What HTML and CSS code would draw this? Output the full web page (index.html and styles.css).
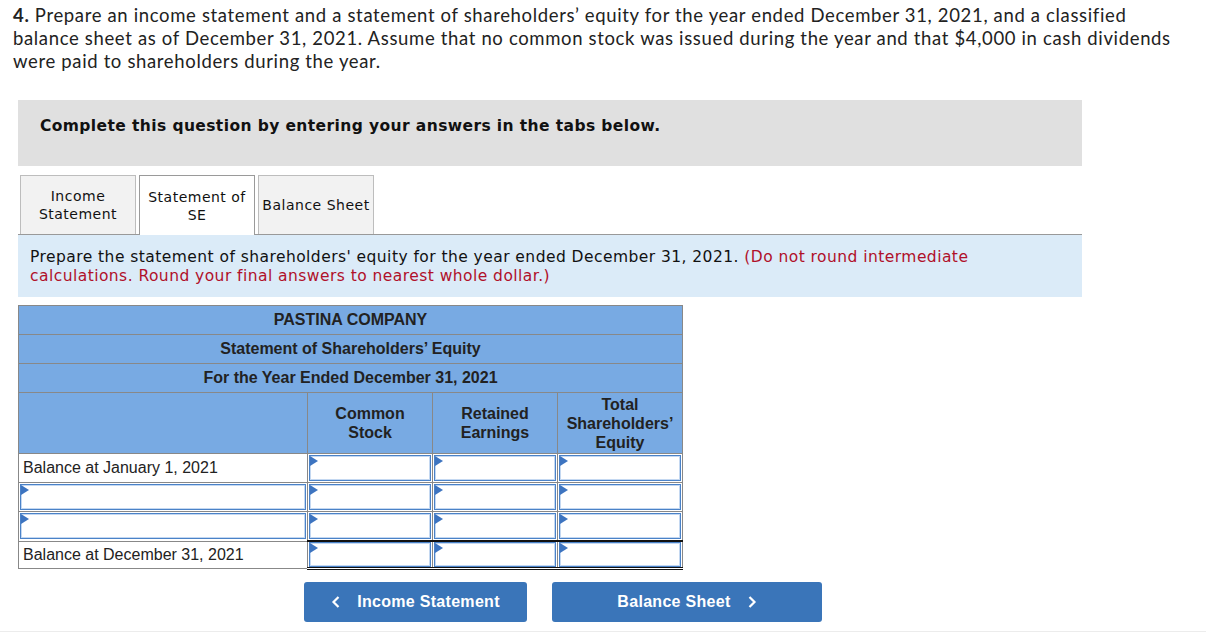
FILE: index.html
```html
<!DOCTYPE html>
<html>
<head>
<meta charset="utf-8">
<link rel="stylesheet" href="styles.css">
</head>
<body>
<div class="page">
  <p class="question"><b>4.</b> Prepare an income statement and a statement of shareholders’ equity for the year ended December 31, 2021, and a classified balance sheet as of December 31, 2021. Assume that no common stock was issued during the year and that $4,000 in cash dividends were paid to shareholders during the year.</p>

  <div class="panel">
    <div class="complete">Complete this question by entering your answers in the tabs below.</div>

    <div class="tabs">
      <div class="tab">Income<br>Statement</div>
      <div class="tab active">Statement of<br>SE</div>
      <div class="tab">Balance Sheet</div>
    </div>

    <div class="instr">Prepare the statement of shareholders' equity for the year ended December 31, 2021. <span class="red">(Do not round intermediate calculations. Round your final answers to nearest whole dollar.)</span></div>

    <table class="se">
      <colgroup><col class="c1"><col class="cn"><col class="cn"><col class="cn"></colgroup>
      <tr class="hrow"><th colspan="4">PASTINA COMPANY</th></tr>
      <tr class="hrow"><th colspan="4">Statement of Shareholders’ Equity</th></tr>
      <tr class="hrow"><th colspan="4">For the Year Ended December 31, 2021</th></tr>
      <tr class="colhead"><th></th><th>Common<br>Stock</th><th>Retained<br>Earnings</th><th>Total<br>Shareholders’<br>Equity</th></tr>
      <tr>
        <td class="label">Balance at January 1, 2021</td>
        <td class="in"><div class="box"></div></td>
        <td class="in"><div class="box"></div></td>
        <td class="in"><div class="box"></div></td>
      </tr>
      <tr>
        <td class="in"><div class="box"></div></td>
        <td class="in"><div class="box"></div></td>
        <td class="in"><div class="box"></div></td>
        <td class="in"><div class="box"></div></td>
      </tr>
      <tr>
        <td class="in"><div class="box"></div></td>
        <td class="in"><div class="box"></div></td>
        <td class="in"><div class="box"></div></td>
        <td class="in"><div class="box"></div></td>
      </tr>
      <tr class="total">
        <td class="label last">Balance at December 31, 2021</td>
        <td class="in tot"><div class="box"></div></td>
        <td class="in tot"><div class="box"></div></td>
        <td class="in tot"><div class="box"></div></td>
      </tr>
    </table>

    <div class="nav">
      <div class="btn prev"><svg width="10" height="14" viewBox="0 0 10 14"><path d="M7.5 2 L2.5 7 L7.5 12" fill="none" stroke="#fff" stroke-width="2.2"/></svg><span>Income Statement</span></div>
      <div class="btn next"><span>Balance Sheet</span><svg width="10" height="14" viewBox="0 0 10 14"><path d="M2.5 2 L7.5 7 L2.5 12" fill="none" stroke="#fff" stroke-width="2.2"/></svg></div>
    </div>
  </div>
  <div class="bottomline"></div>
</div>
</body>
</html>
```

FILE: styles.css
```css
html, body { margin: 0; padding: 0; background: #fff; }
.page { width: 1206px; height: 635px; position: relative; overflow: hidden; }
.question {
  margin: 0;
  padding: 4px 20px 0 13px;
  font-family: Lato, "Open Sans", sans-serif;
  font-size: 18.5px;
  line-height: 23px;
  letter-spacing: 0.65px;
  color: #222;
}
.question b { font-weight: 700; }
.panel { margin: 27px 0 0 18px; width: 1064px; }
.complete {
  background: #e0e0e0;
  height: 66px;
  box-sizing: border-box;
  padding: 17px 0 0 22px;
  font-family: Verdana, "DejaVu Sans", sans-serif;
  font-weight: bold;
  font-size: 15.5px;
  letter-spacing: 0.4px;
  color: #111;
}
.tabs {
  display: flex;
  gap: 3px;
  margin-top: 9px;
  padding-left: 2px;
  border-bottom: 1px solid #999;
}
.tab {
  width: 116px;
  height: 59px;
  box-sizing: border-box;
  border: 1px solid #bdbdbd;
  border-bottom: none;
  background: #f2f2f2;
  display: flex;
  align-items: center;
  justify-content: center;
  text-align: center;
  font-family: Verdana, "DejaVu Sans", sans-serif;
  font-size: 14px;
  line-height: 18px;
  letter-spacing: 0.5px;
  color: #111;
}
.tab.active { background: #fff; border-color: #9a9a9a; margin-bottom: -1px; height: 60px; }
.instr {
  background: #dbebf8;
  height: 62px;
  box-sizing: border-box;
  padding: 13px 100px 0 12px;
  font-family: Verdana, "DejaVu Sans", sans-serif;
  font-size: 15.5px;
  line-height: 19px;
  letter-spacing: 0.45px;
  color: #111;
}
.red { color: #b0102a; }
.se {
  margin-top: 8px;
  border-collapse: collapse;
  font-family: Arial, "Liberation Sans", sans-serif;
  font-size: 16px;
  color: #222;
  border: 1px solid #888;
}
.c1 { width: 289px; }
.cn { width: 125px; }
.se th {
  background: #78aae3;
  font-weight: bold;
  color: #222;
  padding: 0;
  border: 1px solid #888;
  line-height: 18px;
}
.hrow th { height: 28px; }
.colhead th { height: 60px; line-height: 19px; }
.se td { padding: 0; height: 28px; border: 1px solid #888; line-height: 18px; }
.se td.label { padding-left: 4px; background: #fff; }
.se td.label.last { height: 26px; }
.se td.in { padding: 1px; height: 26px; }
.box {
  height: 26px;
  box-sizing: border-box;
  border: 1px solid #4a82c8;
  box-shadow: inset 0 0 0 1px #c4d8f1;
  background: #fff;
  position: relative;
}
.box::before {
  content: "";
  position: absolute;
  left: 0;
  top: 0;
  border-top: 5px solid transparent;
  border-bottom: 5px solid transparent;
  border-left: 8px solid #3d74c0;
}
.se td.tot { border-top: 2px solid #111; border-bottom: 3px double #111; padding: 0 1px; height: 25px; }
.se td.tot .box { height: 25px; }
.nav { display: flex; gap: 25px; margin: 12px 0 0 286px; }
.btn {
  height: 40px;
  background: #3a75b9;
  border-radius: 3px;
  color: #fff;
  font-family: Arial, "Liberation Sans", sans-serif;
  font-weight: bold;
  font-size: 16px;
  letter-spacing: 0.3px;
  display: flex;
  align-items: center;
  justify-content: center;
  gap: 16px;
}
.btn.prev { width: 223px; }
.btn.next { width: 270px; }
.bottomline { position: absolute; left: 0; right: 0; top: 631px; height: 1px; background: #ececec; }
```
